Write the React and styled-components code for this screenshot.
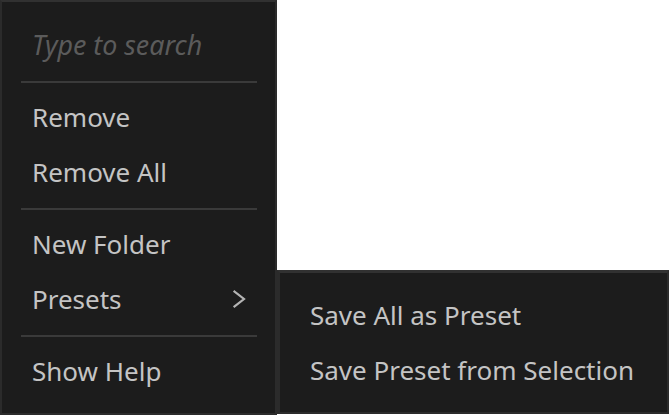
import React from "react";
import styled, { createGlobalStyle } from "styled-components";

const Global = createGlobalStyle`
  html, body {
    margin: 0;
    padding: 0;
    background: #ffffff;
    overflow: hidden;
  }
  body {
    font-family: "Noto Sans", "Open Sans", sans-serif;
  }
`;

const Menu = styled.div`
  position: relative;
  box-sizing: border-box;
  width: 277px;
  padding: 15px 0;
  background: #1c1c1c;
  border: 2px solid #2b2b2b;
  border-top-color: #313131;
  display: flex;
  flex-direction: column;
`;

const SubMenu = styled(Menu)`
  position: absolute;
  left: calc(100% + 2px);
  top: -1px;
  width: 392px;
  border-width: 3px 2px 2px 3px;
  padding: 14px 0 15px;
  z-index: 2;
`;

const Row = styled.div`
  position: relative;
  height: 55px;
  display: flex;
  align-items: center;
  justify-content: space-between;
  padding: 0 29px 0 30px;
  font-size: ${(p) => (p.$placeholder ? "26.8px" : "26px")};
  color: ${(p) => (p.$placeholder ? "#5b5b5b" : "#c4c4c4")};
  font-style: ${(p) => (p.$placeholder ? "italic" : "normal")};
  white-space: nowrap;
  cursor: default;
`;

const Separator = styled.div`
  height: 2px;
  margin: 9px 18px 6px 19px;
  background: #3a3a3a;
`;

const Chevron = () => (
  <svg width="14" height="22" viewBox="0 0 14 22" fill="none">
    <path d="M2.5 3.5 L12 11 L2.5 18.5" stroke="#b4b4b4" strokeWidth="2.2" strokeLinecap="square" />
  </svg>
);

export default function App() {
  return (
    <>
      <Global />
      <Menu>
        <Row $placeholder>Type to search</Row>
        <Separator />
        <Row>Remove</Row>
        <Row>Remove All</Row>
        <Separator />
        <Row>New Folder</Row>
        <Row>
          <span>Presets</span>
          <Chevron />
          <SubMenu>
            <Row>Save All as Preset</Row>
            <Row>Save Preset from Selection</Row>
          </SubMenu>
        </Row>
        <Separator />
        <Row>Show Help</Row>
      </Menu>
    </>
  );
}
